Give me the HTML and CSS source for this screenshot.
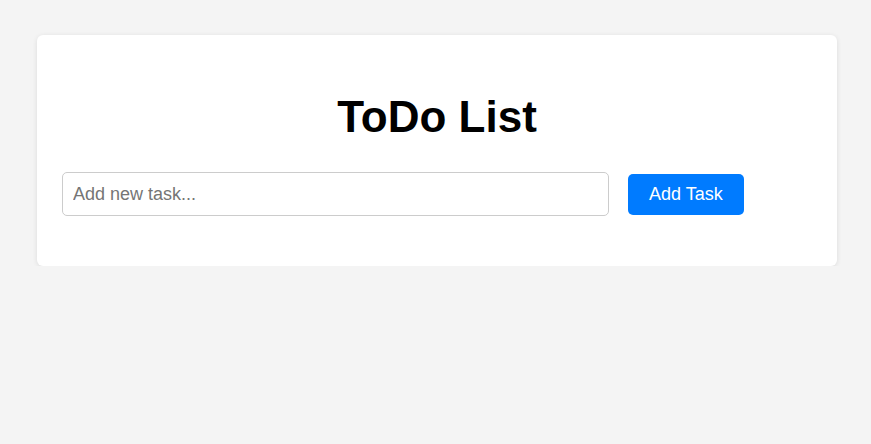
FILE: index.html
```html
<!DOCTYPE html>
<html lang="en">
<head>
<meta charset="UTF-8">
<title>ToDo List</title>
<link rel="stylesheet" href="styles.css">
</head>
<body>
<div class="container">
  <h1 class="title">ToDo List</h1>
  <div class="form">
    <input class="task-input" type="text" placeholder="Add new task...">
    <button class="add-btn">Add Task</button>
  </div>
</div>
</body>
</html>
```
FILE: styles.css
```css
html, body {
  margin: 0;
  background: #f4f4f4;
}
body {
  font-family: "Liberation Sans", Arial, sans-serif;
  padding: 35px 0 0 37px;
}
.container {
  box-sizing: border-box;
  width: 800px;
  background: #fff;
  border-radius: 6px;
  box-shadow: 0 1px 5px rgba(0, 0, 0, 0.1);
  padding: 1px 25px 50px;
}
.title {
  font-size: 44px;
  font-weight: bold;
  text-align: center;
  margin: 56px 0 30px;
  color: #000;
}
.form {
  display: flex;
  align-items: center;
  gap: 19px;
}
.task-input {
  box-sizing: border-box;
  width: 547px;
  height: 44px;
  padding: 10px;
  font-family: inherit;
  font-size: 18px;
  border: 1px solid #ccc;
  border-radius: 5px;
  outline: none;
}
.task-input::placeholder {
  color: #757575;
}
.add-btn {
  height: 41px;
  padding: 0 21px;
  font-family: inherit;
  font-size: 18px;
  color: #fff;
  background: #007bff;
  border: none;
  border-radius: 5px;
}
```
